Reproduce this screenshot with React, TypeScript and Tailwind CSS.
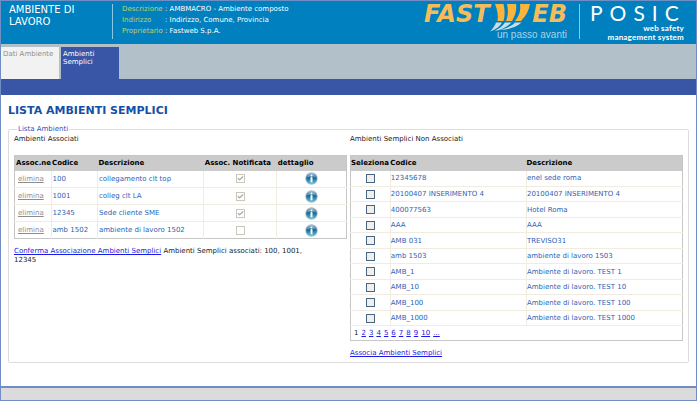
import { useState } from 'react'
import { Check } from 'lucide-react'

const associated = [
  { code: '100', description: 'collegamento clt top', notified: true },
  { code: '1001', description: 'colleg clt LA', notified: true },
  { code: '12345', description: 'Sede cliente SME', notified: true },
  { code: 'amb 1502', description: 'ambiente di lavoro 1502', notified: false },
]

const available = [
  { code: '12345678', description: 'enel sede roma' },
  { code: '20100407 INSERIMENTO 4', description: '20100407 INSERIMENTO 4' },
  { code: '400077563', description: 'Hotel Roma' },
  { code: 'AAA', description: 'AAA' },
  { code: 'AMB 031', description: 'TREVISO31' },
  { code: 'amb 1503', description: 'ambiente di lavoro 1503' },
  { code: 'AMB_1', description: 'Ambiente di lavoro. TEST 1' },
  { code: 'AMB_10', description: 'Ambiente di lavoro. TEST 10' },
  { code: 'AMB_100', description: 'Ambiente di lavoro. TEST 100' },
  { code: 'AMB_1000', description: 'Ambiente di lavoro. TEST 1000' },
]

const info = [
  { label: 'Descrizione', value: 'AMBMACRO - Ambiente composto' },
  { label: 'Indirizzo', value: 'Indirizzo, Comune, Provincia' },
  { label: 'Proprietario', value: 'Fastweb S.p.A.' },
]

const pages = ['2', '3', '4', '5', '6', '7', '8', '9', '10', '...']

function InfoIcon() {
  return (
    <svg viewBox="0 0 24 24" className="size-[13px]" aria-hidden="true">
      <defs>
        <linearGradient id="ball" x1="0" y1="0" x2="0" y2="1">
          <stop offset="0" stopColor="#4b8fb0" />
          <stop offset="0.45" stopColor="#1d6690" />
          <stop offset="1" stopColor="#5cc4e6" />
        </linearGradient>
      </defs>
      <circle cx="12" cy="12" r="11.5" fill="#a3bccb" />
      <circle cx="12" cy="12" r="9.8" fill="url(#ball)" />
      <path d="M4 10a8 8 0 0 1 16 0c-4-2-12-2-16 0Z" fill="#fff" opacity="0.3" />
      <circle cx="12" cy="6.5" r="1.8" fill="#fff" />
      <path d="M10.2 9.5h3.6V19h-3.6Z" fill="#fff" />
    </svg>
  )
}

function FastwebLogo() {
  return (
    <div className="relative flex h-[38px] w-[146px] flex-col items-end">
      <div className="flex h-5 w-full items-center justify-between pl-[3px] font-['DejaVu_Sans'] text-2xl leading-5 font-bold text-[#f4bd5c] italic">
        <span>FAST</span>
        <span>EB</span>
      </div>
      {/* W made of three blades, with their silver tails */}
      <svg viewBox="0 0 147 38" className="absolute inset-0 h-[38px] w-[147px]" aria-hidden="true">
        <g fill="#fbb53c">
          <path d="M74 0h8.5c1.5 6 1.500 12 0 17h-6c1-5 0-11-2.500-17Z" />
          <path d="M86 0h9c1 6-1 12-4 17h-6c2-5 2.500-11 1-17Z" />
          <path d="M99 0h10c-1 6-4 12-9 17h-6c4-5 6-10 5-17Z" />
        </g>
        <g fill="#cbdde8">
          <path d="M75 18.500h6c-2 4-6 7-12 9 3-3 5-6 6-9Z" />
          <path d="M84 18.500h6.500c-4 4-9 7-17 8.500 5-2.500 8-5 10.500-8.500Z" />
          <path d="M94 18.500h6.500c-5 4.500-11 6.500-21 7.500 7-2 11-4 14.500-7.500Z" />
        </g>
      </svg>
      <p className="mt-[6px] font-['Liberation_Sans'] text-[10px] leading-[10px] text-[#a9d2ea]">un passo avanti</p>
    </div>
  )
}

function Header() {
  return (
    <header className="flex h-[43px] items-start bg-[#0080be] pt-[3px] pl-2 text-white">
      <h1 className="w-[103px] text-[10px] leading-3">
        AMBIENTE DI
        <br />
        LAVORO
      </h1>
      <div className="h-[35px] w-px bg-[#8cc8e6]" />
      <dl className="ml-[9px] flex-1">
        {info.map(item => (
          <div key={item.label} className="flex h-[11px] leading-[11px]">
            <dt className="w-[43px] text-[#c5cf6a]">{item.label}</dt>
            <dd>: {item.value}</dd>
          </div>
        ))}
      </dl>
      <FastwebLogo />
      <div className="ml-3 h-[35px] w-px bg-[#8cc8e6]" />
      <div className="mr-3 ml-[10px] w-[94px] font-['Lato'] text-[8px] leading-[9px]">
        <p className="h-5 text-[21px] leading-[18px] tracking-[7px]">POSIC</p>
        <div className="text-right font-bold tracking-wide">
          <p>web safety</p>
          <p className="whitespace-nowrap">management system</p>
        </div>
      </div>
    </header>
  )
}

function AssociatedTable() {
  return (
    <table className="w-full table-fixed border-collapse border border-[#c6c6c6]">
      <colgroup>
        <col className="w-[11%]" />
        <col className="w-[14%]" />
        <col className="w-[32%]" />
        <col className="w-[22%]" />
        <col className="w-[21%]" />
      </colgroup>
      <thead>
        <tr className="h-[15px] bg-[#cbcbcb] text-left whitespace-nowrap text-black">
          <th className="pl-px">Assoc.ne</th>
          <th className="pl-px">Codice</th>
          <th className="pl-px">Descrizione</th>
          <th className="pl-px">Assoc. Notificata</th>
          <th className="pl-px">dettaglio</th>
        </tr>
      </thead>
      <tbody>
        {associated.map(row => (
          <tr
            key={row.code}
            className="h-[17px] text-[#2e5fb5] [&>td]:border-r [&>td]:border-b [&>td]:border-[#f0ece2] [&>td:last-child]:border-r-0 last:[&>td]:border-b-0"
          >
            <td className="pl-[3px]">
              <a href="#" className="text-[#8c8c8c] underline">elimina</a>
            </td>
            <td className="pl-px whitespace-nowrap">{row.code}</td>
            <td className="pl-px">{row.description}</td>
            <td>
              <div className="grid place-items-center *:[grid-area:1/1]">
                <input
                  type="checkbox"
                  disabled
                  checked={row.notified}
                  readOnly
                  aria-label={`Notificata ${row.code}`}
                  className="size-[9px] appearance-none border border-[#c9c8bf] bg-white"
                />
                {row.notified && <Check className="size-[7px] text-[#a5a59d]" strokeWidth={4} />}
              </div>
            </td>
            <td>
              <button type="button" aria-label={`Dettaglio ${row.code}`} className="mx-auto block">
                <InfoIcon />
              </button>
            </td>
          </tr>
        ))}
      </tbody>
    </table>
  )
}

function AvailableTable() {
  const [selected, setSelected] = useState<string[]>([])

  const toggle = (code: string) =>
    setSelected(s => (s.includes(code) ? s.filter(c => c !== code) : [...s, code]))

  return (
    <table className="w-full table-fixed border-collapse border border-[#c6c6c6]">
      <colgroup>
        <col className="w-[12%]" />
        <col className="w-[41%]" />
        <col className="w-[47%]" />
      </colgroup>
      <thead>
        <tr className="h-[15px] bg-[#cbcbcb] text-left whitespace-nowrap text-black">
          <th>Seleziona</th>
          <th>Codice</th>
          <th>Descrizione</th>
        </tr>
      </thead>
      <tbody>
        {available.map(row => (
          <tr
            key={row.code}
            className="text-[#2e5fb5] odd:h-4 even:h-[15px] [&>td]:border-r [&>td]:border-b [&>td]:border-[#f0ece2] [&>td:last-child]:border-r-0"
          >
            <td>
              <input
                type="checkbox"
                checked={selected.includes(row.code)}
                onChange={() => toggle(row.code)}
                aria-label={`Seleziona ${row.code}`}
                className="mx-auto block size-[9px] appearance-none border border-[#4a6580] bg-[#eef0ee] checked:bg-[#4a6580]"
              />
            </td>
            <td>{row.code}</td>
            <td>{row.description}</td>
          </tr>
        ))}
      </tbody>
      <tfoot>
        <tr className="h-[15px]">
          <td colSpan={3} className="pl-[3px]">
            <div className="flex gap-[3px]">
              <span>1</span>
              {pages.map(p => (
                <a key={p} href="#" className="text-[#1a1ae6] underline">{p}</a>
              ))}
            </div>
          </td>
        </tr>
      </tfoot>
    </table>
  )
}

export default function App() {
  return (
    <div className="flex min-h-screen flex-col border border-[#6f8fc4] bg-white font-['DejaVu_Sans',Verdana,sans-serif] text-[7px] leading-2 text-[#222222]">
      <Header />

      <nav className="flex h-[35px] items-end gap-[2px] bg-[#b2c1c9]">
        <a href="#" className="h-8 w-[58px] bg-[#f2f2f2] pt-[3px] pl-[2px] whitespace-nowrap text-[#8f8f8f]">
          Dati Ambiente
        </a>
        <a href="#" aria-current="page" className="h-8 w-[58px] bg-[#3955a6] pt-[3px] pl-[2px] text-white">
          Ambienti Semplici
        </a>
      </nav>
      <div className="h-4 bg-[#3955a6]" />

      <main className="flex-1 px-[7px] pt-[10px]">
        <h2 className="text-[11px] leading-3 font-bold text-[#1450a8]">LISTA AMBIENTI SEMPLICI</h2>
        <fieldset className="mt-2 grid grid-cols-2 gap-[3px] rounded-xs border border-[#dcdcdc] pr-[5px] pb-[5px] pl-[5px]">
          <legend className="ml-[3px] px-px text-[#2e50c0]">Lista Ambienti</legend>
          <section>
            <h3 className="mb-3 pt-[2px]">Ambienti Associati</h3>
            <AssociatedTable />
            <p className="mt-2 pr-6 leading-[9px]">
              <a href="#" className="text-[#1a1ae6] underline">Conferma Associazione Ambienti Semplici</a>{' '}
              Ambienti Semplici associati: 100, 1001, 12345
            </p>
          </section>
          <section>
            <h3 className="mb-3 pt-[2px]">Ambienti Semplici Non Associati</h3>
            <AvailableTable />
            <a href="#" className="mt-2 block text-[#1a1ae6] underline">Associa Ambienti Semplici</a>
          </section>
        </fieldset>
      </main>

      <footer className="mt-2 h-[14px] border-t-2 border-[#6f8fc4] bg-[#dbdbdb]" />
    </div>
  )
}
